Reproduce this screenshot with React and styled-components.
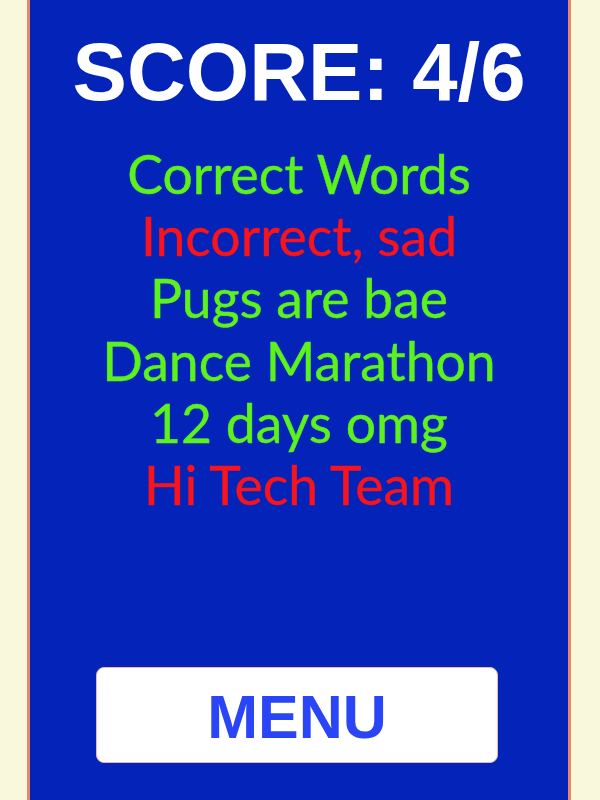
import React from 'react'
import styled, { createGlobalStyle } from 'styled-components'

const GlobalStyle = createGlobalStyle`
  html, body {
    margin: 0;
    padding: 0;
    background: #faf8dc;
  }
`

const Page = styled.div`
  height: 800px;
  display: flex;
  justify-content: center;
  background: #faf8dc;
  overflow: hidden;
`

const Panel = styled.div`
  width: 538px;
  margin-left: -2px;
  border-left: 3px solid #e8876a;
  border-right: 3px solid #e8876a;
  background: #0323b9;
  display: flex;
  flex-direction: column;
  align-items: center;
`

const Score = styled.h1`
  margin: 31px 0 0;
  font-family: "Liberation Sans", Arial, sans-serif;
  font-weight: bold;
  font-size: 81.5px;
  line-height: 81px;
  color: #ffffff;
`

const WordList = styled.ul`
  list-style: none;
  margin: 30px 0 0;
  padding: 0;
  text-align: center;
`

const Word = styled.li`
  font-family: Lato, "Noto Sans", sans-serif;
  font-size: 53.5px;
  line-height: 62.2px;
  color: ${p => (p.correct ? '#5cf21c' : '#f8141c')};
  -webkit-text-stroke: 0.4px currentColor;
`

const MenuButton = styled.button`
  margin: auto 0 37px -4px;
  padding: 4px 0 0;
  width: 402px;
  height: 96px;
  background: #ffffff;
  border: 1px solid #e9b6b0;
  border-radius: 8px;
  font-family: "Liberation Sans", Arial, sans-serif;
  font-weight: bold;
  font-size: 61px;
  color: #2a45f5;
  cursor: pointer;
`

const words = [
  { text: 'Correct Words', correct: true },
  { text: 'Incorrect, sad', correct: false },
  { text: 'Pugs are bae', correct: true },
  { text: 'Dance Marathon', correct: true },
  { text: '12 days omg', correct: true },
  { text: 'Hi Tech Team', correct: false },
]

export default function App() {
  return (
    <>
      <GlobalStyle />
      <Page>
        <Panel>
          <Score>SCORE: 4/6</Score>
          <WordList>
            {words.map(w => (
              <Word key={w.text} correct={w.correct}>{w.text}</Word>
            ))}
          </WordList>
          <MenuButton>MENU</MenuButton>
        </Panel>
      </Page>
    </>
  )
}
